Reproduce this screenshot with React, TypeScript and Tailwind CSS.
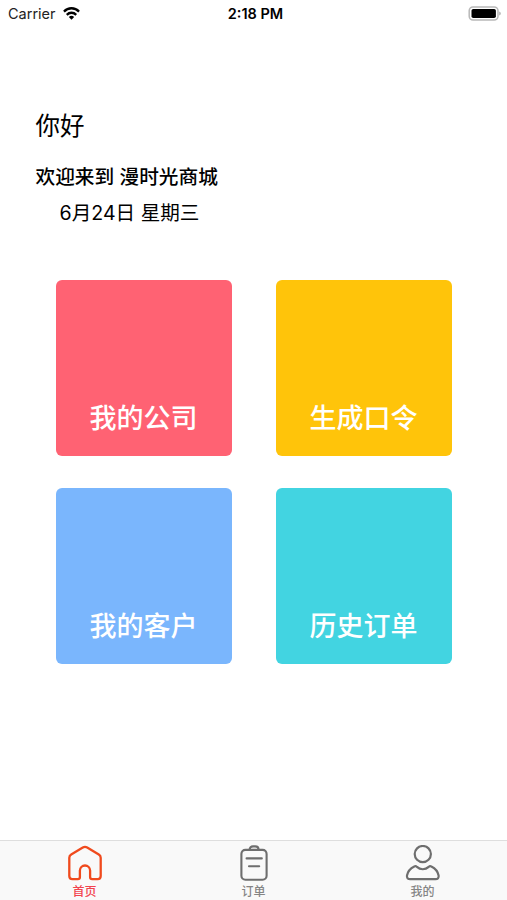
const tiles = [
  { label: "我的公司", color: "bg-[#ff6273]" },
  { label: "生成口令", color: "bg-[#ffc40a]" },
  { label: "我的客户", color: "bg-[#7ab6fd]" },
  { label: "历史订单", color: "bg-[#42d4e1]" }
];

function WifiIcon() {
  return (
    <svg className="ml-[7px] h-[13px] w-[17px]" viewBox="0 0 18 13" preserveAspectRatio="none" fill="none" stroke="#000" strokeWidth="2.4">
      <path d="M1 4.6C5.4.2 12.6.2 17 4.6" />
      <path d="M4 7.8c2.8-2.8 7.2-2.8 10 0" />
      <path d="M9 12.8 6.2 10c1.6-1.6 4-1.6 5.6 0L9 12.8Z" fill="#000" stroke="none" />
    </svg>
  );
}

function BatteryIcon() {
  return (
    <svg className="h-4 w-[34px]" viewBox="0 0 34 16" fill="none">
      <rect x="1.2" y="1" width="28.8" height="13" rx="3.8" stroke="#b8b8b8" strokeWidth="1.5" />
      <rect x="3.5" y="3" width="24.4" height="9" rx="1.8" fill="#000" />
      <path d="M31.4 5.5c1.6.7 1.6 3.3 0 4V5.5Z" fill="#999" />
    </svg>
  );
}

function HomeIcon() {
  return (
    <svg className="h-9 w-9" viewBox="0 0 36 36" fill="none" stroke="#f04a1d" strokeWidth="2.3" strokeLinejoin="round">
      <path d="M5.4 34.1h5.4c1.3 0 2.1-.8 2.1-2.1v-6.4a5.1 5.1 0 0 1 10.2 0V32c0 1.3.8 2.1 2.1 2.1h5.4c2 0 3.1-1.1 3.1-3.1V12.8c0-1.5-.6-2.5-1.9-3.3L20.2 2.6c-1.5-.9-2.9-.9-4.4 0L4.2 9.5c-1.3.8-1.9 1.8-1.9 3.3V31c0 2 1.1 3.1 3.1 3.1Z" />
    </svg>
  );
}

function OrderIcon() {
  return (
    <svg className="h-9 w-9" viewBox="0 0 36 36" fill="none" stroke="#6e6e6e" strokeWidth="2.1" strokeLinecap="round">
      <rect x="5.4" y="4.9" width="25.2" height="29.9" rx="4" />
      <path d="M13.6 4.8c0-2 1.4-3.4 3.4-3.4h2.2c2 0 3.4 1.4 3.4 3.4" />
      <path d="M10.6 13.4h15.2M13 21.3h10.2" />
    </svg>
  );
}

function UserIcon() {
  return (
    <svg className="h-9 w-9" viewBox="0 0 36 36" fill="none" stroke="#6e6e6e" strokeWidth="2.2" strokeLinejoin="round">
      <circle cx="17.8" cy="9.1" r="8.1" />
      <path d="M9.3 21.4c1-.5 1.9-.3 2.6.5 3.4 3.1 8.4 3.1 11.8 0 .7-.8 1.6-1 2.6-.5 3.8 1.8 6.6 5.2 7.3 9.1.4 2.4-.8 3.7-3.2 3.7H5.2c-2.4 0-3.6-1.3-3.2-3.7.7-3.9 3.5-7.3 7.3-9.1Z" />
    </svg>
  );
}

const tabs = [
  { label: "首页", icon: <HomeIcon />, color: "text-[#f2434e]" },
  { label: "订单", icon: <OrderIcon />, color: "text-[#858585]" },
  { label: "我的", icon: <UserIcon />, color: "text-[#858585]" }
];

export default function App() {
  return (
    <main className="flex h-[900px] w-[507px] flex-col bg-white font-['Inter','Noto_Sans_CJK_SC',sans-serif] text-black">
      <header className="grid h-[27px] grid-cols-3 items-center pr-[5px] pl-2">
        <div className="flex items-center text-[14.5px] text-[#222]">
          Carrier
          <WifiIcon />
        </div>
        <span className="pl-px text-center text-[14.5px] font-semibold">2:18 PM</span>
        <div className="flex justify-end">
          <BatteryIcon />
        </div>
      </header>

      <section className="flex flex-col pt-[81px] pl-[35.5px]">
        <h1 className="text-[24.5px] leading-9">你好</h1>
        <p className="mt-[19px] text-[19.7px] leading-7 font-medium">欢迎来到 漫时光商城</p>
        <p className="mt-2 pl-6 text-[19.6px] leading-7">6月24日 星期三</p>
      </section>

      <section className="mt-[53px] grid grid-cols-[176px_176px] gap-x-11 gap-y-8 pl-14">
        {tiles.map((tile) => (
          <button
            className={`flex h-44 items-end justify-center rounded-md pr-px pb-[17px] text-[27px] leading-10 font-medium text-white ${tile.color}`}
            key={tile.label}
          >
            {tile.label}
          </button>
        ))}
      </section>

      <nav className="mt-auto grid h-[60px] grid-cols-3 border-t border-[#dedede] bg-[#f9f9f9]">
        {tabs.map((tab) => (
          <div className={`flex flex-col items-center pt-1 ${tab.color}`} key={tab.label}>
            {tab.icon}
            <span className="mt-0.5 text-xs leading-[18px] font-medium">{tab.label}</span>
          </div>
        ))}
      </nav>
    </main>
  );
}
